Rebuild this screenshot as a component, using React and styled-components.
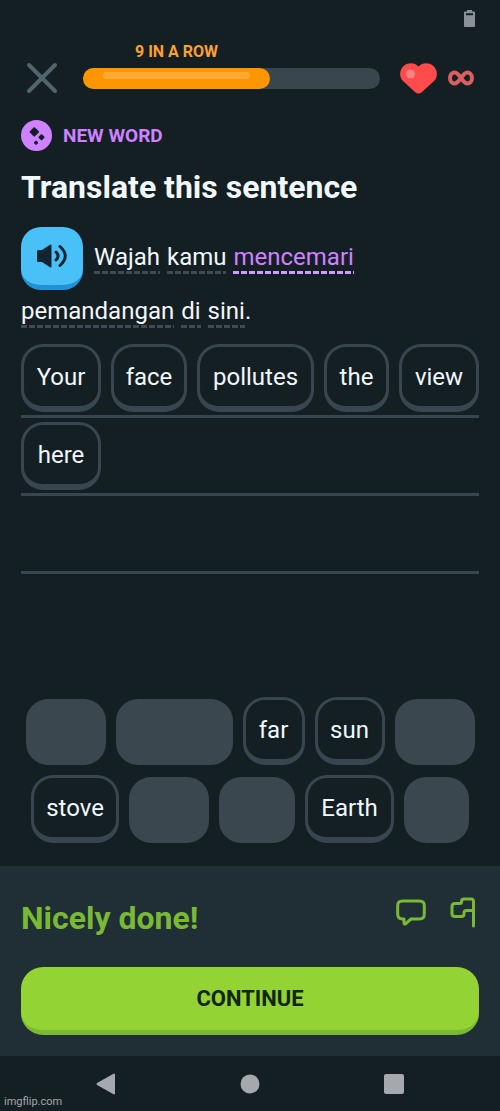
import React from 'react'
import styled, { createGlobalStyle, css } from 'styled-components'

const sentence = [
    { text: 'Wajah' },
    { text: 'kamu' },
    { text: 'mencemari', isNew: true },
    { text: 'pemandangan' },
    { text: 'di' },
    { text: 'sini', after: '.' },
]

const answer = [
    [
        { text: 'Your', width: 80 },
        { text: 'face', width: 76 },
        { text: 'pollutes', width: 117 },
        { text: 'the', width: 65 },
        { text: 'view', width: 80 },
    ],
    [{ text: 'here', width: 80 }],
    [],
]

const bank = [
    { width: 80 },
    { width: 117 },
    { text: 'far', width: 62 },
    { text: 'sun', width: 70 },
    { width: 80 },
    { text: 'stove', width: 88 },
    { width: 80 },
    { width: 76 },
    { text: 'Earth', width: 89 },
    { width: 65 },
]

const progress = 63

const App = () => {
    return (
        <Page>
            <GlobalStyle />
            <StatusBar>
                <svg width="11" height="17" viewBox="0 0 11 17" fill="#8b9296" fillRule="evenodd">
                    <path d="M3 0h5v1.500h2q1 0 1 1V16q0 1-1 1H1q-1 0-1-1V2.500q0-1 1-1h2zM2 3.300V5.200h7V3.300z" />
                </svg>
            </StatusBar>
            <Main>
                <Header>
                    <StreakRow>
                        <Streak style={{ width: `${progress}%` }}>9 IN A ROW</Streak>
                    </StreakRow>
                    <CloseButton aria-label="Close">
                        <svg width="32" height="32" viewBox="0 0 32 32" stroke="#52656d" strokeWidth="4" strokeLinecap="round">
                            <path d="M3 3L29 29M29 3L3 29" />
                        </svg>
                    </CloseButton>
                    <Track role="progressbar" aria-valuenow={progress} aria-label="Lesson progress">
                        <Fill style={{ width: `${progress}%` }}>
                            <Shine />
                        </Fill>
                    </Track>
                    <Lives>
                        <svg width="37" height="31" viewBox="0 0 37 31">
                            <path d="M18.500 3.500C22 -.5 28.500-1 32.800 2.600C37.800 6.800 38.200 13.500 34 18L22 29Q18.500 32 15 29L3 18C-1.200 13.500-.8 6.800 4.200 2.600C8.500-1 15-.5 18.500 3.500z" fill="#ff4b4b" />
                            <circle cx="10.500" cy="11" r="4.500" fill="#ff8080" />
                        </svg>
                        <svg width="26" height="16" viewBox="0 0 26 16" fill="none" stroke="#d95f60" strokeWidth="4">
                            <path d="M13 8C10.500 4.500 9 2.500 6.800 2.500C4 2.500 2 5 2 8S4 13.500 6.800 13.500C9 13.500 10.500 11.500 13 8S17 2.500 19.200 2.500C22 2.500 24 5 24 8S22 13.500 19.200 13.500C17 13.500 15.500 11.500 13 8z" />
                        </svg>
                    </Lives>
                </Header>

                <NewWord>
                    <svg width="31" height="31" viewBox="0 0 31 31">
                        <circle cx="15.500" cy="15.500" r="15.500" fill="#ce82ff" />
                        <g fill="#141f23" stroke="#141f23" strokeWidth="2" strokeLinejoin="round">
                            <path d="M13.300 8.200L17 11.900L13.300 15.600L9.600 11.900z" />
                            <path d="M20.500 15.200L22.500 17.200L20.500 19.200L18.500 17.200z" />
                            <path d="M15 21.600L16.100 22.700L15 23.800L13.900 22.700z" />
                        </g>
                    </svg>
                    NEW WORD
                </NewWord>
                <Title>Translate this sentence</Title>

                <Sentence>
                    <Speaker aria-label="Play sentence">
                        <svg width="32" height="24" viewBox="0 0 32 24">
                            <path d="M1 7.500Q1 6 2.500 6H6L14 .8Q15.500 0 15.500 1.500V22.500Q15.500 24 14 23.200L6 18H2.500Q1 18 1 16.500z" fill="#10252f" />
                            <g fill="none" stroke="#10252f" strokeWidth="3" strokeLinecap="round">
                                <path d="M20 8Q24 12 20 16" />
                                <path d="M24 2.500Q34.500 12 24 21.500" />
                            </g>
                        </svg>
                    </Speaker>
                    {sentence.map(({ text, isNew, after }) => (
                        <span key={text}>
                            <Word $isNew={isNew}>{text}</Word>
                            {after}
                        </span>
                    ))}
                </Sentence>

                {answer.map((row, i) => (
                    <AnswerRow key={i}>
                        {row.map(({ text, width }) => (
                            <Tile key={text} $width={width}>{text}</Tile>
                        ))}
                    </AnswerRow>
                ))}

                <Bank>
                    {bank.map(({ text, width }, i) => (
                        text
                            ? <Tile key={i} $width={width}>{text}</Tile>
                            : <Slot key={i} $width={width} />
                    ))}
                </Bank>
            </Main>

            <Result>
                <ResultHead>
                    <h2>Nicely done!</h2>
                    <ResultActions>
                        <IconButton aria-label="Discuss">
                            <svg width="30" height="27" viewBox="0 0 30 27">
                                <path d="M6.500 2H23.500Q28.300 2 28.300 6.800V15Q28.300 20 23.500 20H15L9.500 24.800Q8 25.500 8 23.800V20H6.500Q1.700 20 1.700 15V6.800Q1.700 2 6.500 2z" />
                            </svg>
                        </IconButton>
                        <IconButton aria-label="Report">
                            <svg width="26" height="31" viewBox="0 0 26 31">
                                <path d="M23.500 29V4.500Q23.500 2 21 2H14Q11.500 2 11.500 4.500V5Q11.500 6.500 10 6.500H5Q2 6.500 2 9.500V16.500Q2 19.500 5 19.500H11.500Q14 19.500 14 17V16Q14 13.500 16.500 13.500H23.500" />
                            </svg>
                        </IconButton>
                    </ResultActions>
                </ResultHead>
                <Continue>CONTINUE</Continue>
            </Result>

            <NavBar>
                <IconButton aria-label="Back">
                    <svg width="20" height="22" viewBox="0 0 20 22">
                        <path d="M1 10Q0 11 1 12L17.500 21.300Q19 22 19 20.500V1.500Q19 0 17.500 .7z" />
                    </svg>
                </IconButton>
                <IconButton aria-label="Home">
                    <svg width="20" height="20" viewBox="0 0 20 20">
                        <circle cx="10" cy="10" r="9.500" />
                    </svg>
                </IconButton>
                <IconButton aria-label="Recent apps">
                    <svg width="20" height="20" viewBox="0 0 20 20">
                        <rect width="20" height="20" rx="2" />
                    </svg>
                </IconButton>
                <Watermark>imgflip.com</Watermark>
            </NavBar>
        </Page>
    )
}

const GlobalStyle = createGlobalStyle`
    *{
        box-sizing: border-box;
    }
    body{
        margin: 0;
        background: #141f23;
    }
    button{
        font-family: inherit;
        cursor: pointer;
    }
    svg{
        display: block;
        flex-shrink: 0;
    }
`

const Page = styled.div`
    min-height: 100vh;
    display: flex;
    flex-direction: column;
    background: #141f23;
    color: #f1f7fb;
    font-family: Roboto, "Liberation Sans", sans-serif;
`

const StatusBar = styled.div`
    display: flex;
    justify-content: flex-end;
    height: 43px;
    padding: 10px 25px 0;
`

const Main = styled.main`
    flex: 1;
    display: flex;
    flex-direction: column;
    padding: 0 21px 23px;
`

const Header = styled.header`
    display: grid;
    grid-template-columns: 42px 1fr auto;
    column-gap: 20px;
    align-items: center;
`

const StreakRow = styled.div`
    grid-column: 2;
    grid-row: 1;
`

const Streak = styled.div`
    color: #ff9f2e;
    font-size: 16px;
    font-weight: 700;
    line-height: 18px;
    text-align: center;
    white-space: nowrap;
`

const IconButton = styled.button`
    display: flex;
    justify-content: center;
    align-items: center;
    padding: 0;
    border: none;
    background: none;
`

const CloseButton = styled(IconButton)`
    grid-column: 1;
    grid-row: 2;
`

const Track = styled.div`
    grid-column: 2;
    grid-row: 2;
    height: 21px;
    border-radius: 11px;
    background: #3a464e;
`

const Fill = styled.div`
    height: 100%;
    padding: 4px 20px;
    border-radius: 11px;
    background: #ff9600;
`

const Shine = styled.div`
    height: 7px;
    border-radius: 4px;
    background: #ffab33;
`

const Lives = styled.div`
    grid-column: 3;
    grid-row: 2;
    display: flex;
    align-items: center;
    gap: 11px;
    height: 34px;
    padding-right: 5px;
`

const NewWord = styled.div`
    display: flex;
    align-items: center;
    gap: 11px;
    margin-top: 25px;
    color: #ce82ff;
    font-size: 19px;
    font-weight: 700;
`

const Title = styled.h1`
    margin: 18px 0 22px;
    font-size: 32px;
    font-weight: 700;
    line-height: 36px;
`

const Sentence = styled.div`
    display: flex;
    flex-wrap: wrap;
    align-items: center;
    gap: 7px;
    margin-bottom: 12px;
    font-size: 24px;
    line-height: 28px;
`

const Speaker = styled.button`
    display: flex;
    justify-content: center;
    align-items: center;
    width: 62px;
    height: 63px;
    margin-right: 4px;
    padding: 0;
    border: none;
    border-bottom: 5px solid #1f93d6;
    border-radius: 20px;
    background: #49c0f8;
`

const Word = styled.span`
    display: inline-block;
    padding-bottom: 3px;
    color: ${props => props.$isNew ? '#ce82ff' : 'inherit'};
    background: repeating-linear-gradient(
        90deg,
        ${props => props.$isNew ? '#ce9bff' : '#3f4b52'} 0 6px,
        transparent 6px 8px
    ) left bottom / 100% 3px no-repeat;
`

const AnswerRow = styled.div`
    display: flex;
    justify-content: flex-start;
    gap: 10px;
    height: 78px;
    padding-top: 4px;
    border-bottom: 3px solid #37464f;
`

const tileBox = css`
    width: ${props => props.$width}px;
    border-radius: 22px;
`

const Tile = styled.button`
    ${tileBox}
    height: 68px;
    padding: 0;
    border: 3px solid #37464f;
    border-bottom-width: 6px;
    background: #141f23;
    color: #f1f7fb;
    font-size: 24px;
    line-height: 28px;
`

const Slot = styled.div`
    ${tileBox}
    height: 66px;
    background: #3a474f;
`

const Bank = styled.div`
    display: flex;
    flex-wrap: wrap;
    justify-content: center;
    align-items: flex-end;
    gap: 10px;
    margin-top: auto;
`

const Result = styled.section`
    padding: 31px 21px 21px;
    background: #202e35;
`

const ResultHead = styled.div`
    display: flex;
    justify-content: space-between;
    align-items: flex-start;
    margin-bottom: 31px;
    h2{
        margin: 0;
        padding-top: 3px;
        color: #79b933;
        font-size: 32px;
        font-weight: 700;
        line-height: 36px;
    }
`

const ResultActions = styled.div`
    display: flex;
    align-items: center;
    gap: 24px;
    padding-right: 3px;
    svg{
        fill: none;
        stroke: #79b933;
        stroke-width: 3px;
        stroke-linecap: round;
        stroke-linejoin: round;
    }
`

const Continue = styled.button`
    width: 100%;
    height: 68px;
    border: none;
    border-bottom: 5px solid #79b933;
    border-radius: 22px;
    background: #93d334;
    color: #12260f;
    font-size: 22px;
    font-weight: 700;
`

const NavBar = styled.nav`
    position: relative;
    display: flex;
    justify-content: space-between;
    align-items: center;
    height: 55px;
    padding: 0 96px;
    svg{
        fill: #a5a8ad;
    }
`

const Watermark = styled.span`
    position: absolute;
    left: 4px;
    bottom: 2px;
    color: #a3a7a9;
    font-size: 11px;
    line-height: 14px;
`

export default App
